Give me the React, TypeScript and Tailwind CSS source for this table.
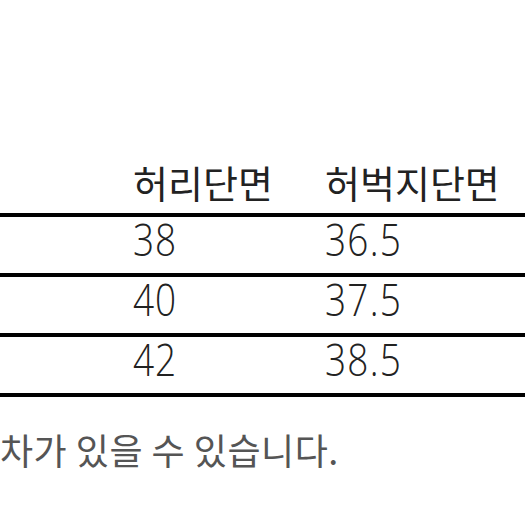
export default function App() {
  const rows = [
    { size: 'S', waist: '38', thigh: '36.5' },
    { size: 'M', waist: '40', thigh: '37.5' },
    { size: 'L', waist: '42', thigh: '38.5' },
  ]

  return (
    <div
      className="w-[525px] h-[525px] overflow-hidden bg-white text-[#222]"
      style={{ fontFamily: '"Noto Sans CJK KR", "Noto Sans", sans-serif' }}
    >
      {/* 사이즈 표 (왼쪽 열은 화면 밖으로 잘려 있음) */}
      <div className="pt-[150px] -ml-[92px] w-[617px]">
        <div className="grid grid-cols-[225px_192px_1fr] h-[67px] border-b-4 border-black items-center">
          <span />
          <span className="text-[38px] leading-none whitespace-nowrap">허리단면</span>
          <span className="text-[38px] leading-none whitespace-nowrap">허벅지단면</span>
        </div>
        {rows.map(r => (
          <div key={r.size} className="grid grid-cols-[225px_192px_1fr] h-[60px] pb-[20px] border-b-4 border-black items-center">
            <span />
            <span className="text-[44px] leading-none font-[350] tracking-[1px] inline-block origin-left scale-x-[0.84]" style={{ fontFamily: '"Open Sans", sans-serif' }}>{r.waist}</span>
            <span className="text-[44px] leading-none font-[350] tracking-[1.5px] inline-block origin-left scale-x-[0.84]" style={{ fontFamily: '"Open Sans", sans-serif' }}>{r.thigh}</span>
          </div>
        ))}
      </div>

      {/* 안내 문구 */}
      <p className="mt-[34px] text-[36px] leading-none tracking-[0.5px] text-[#555] whitespace-nowrap">
        차가 있을 수 있습니다.
      </p>
    </div>
  )
}
